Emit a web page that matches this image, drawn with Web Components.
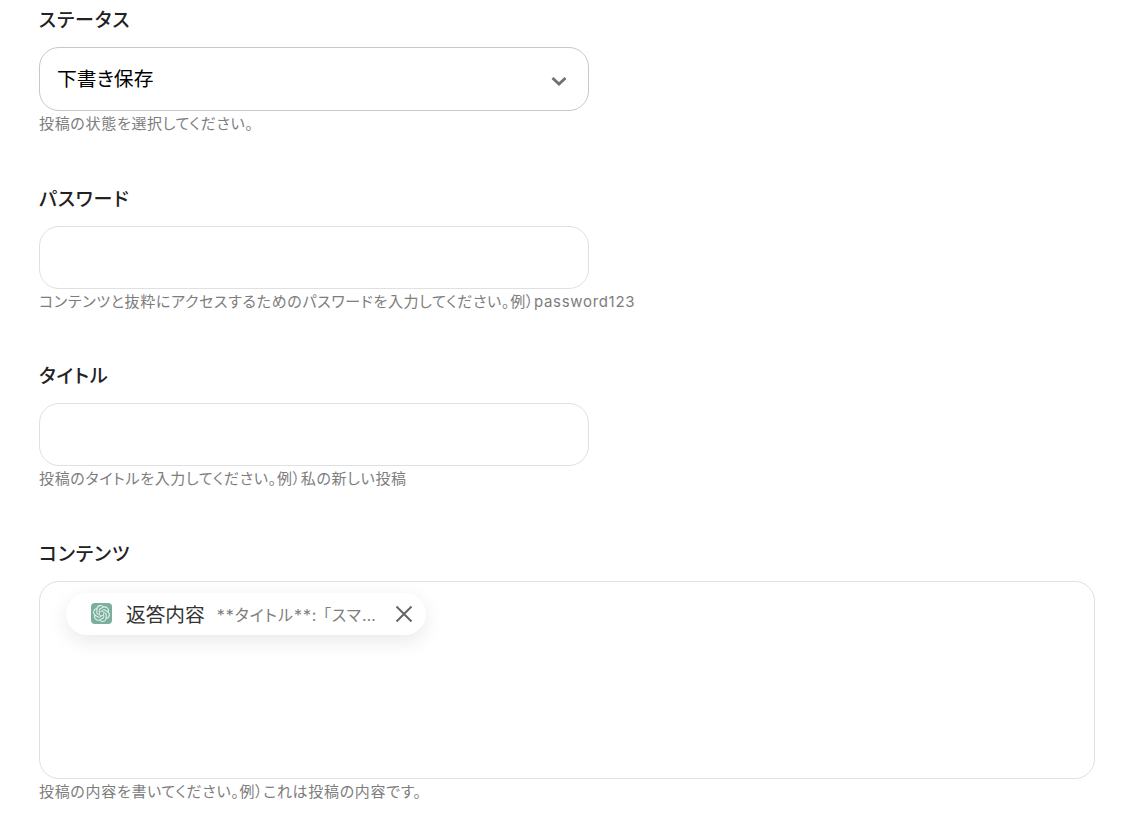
<!DOCTYPE html>
<html lang="ja"><head><meta charset="utf-8"><style>
html,body{margin:0;background:#fff;font-family:Inter,"Noto Sans CJK JP",sans-serif;}
body{height:827px;overflow:hidden}
form-page{padding:8.3px 33px 0 39px}
</style></head><body>
<form-page>
<form-field label="ステータス" hint="投稿の状態を選択してください。" kind="select">下書き保存</form-field>
<form-field label="パスワード" hint="コンテンツと抜粋にアクセスするためのパスワードを入力してください。例）password123" kind="input"></form-field>
<form-field label="タイトル" hint="投稿のタイトルを入力してください。例）私の新しい投稿" kind="input"></form-field>
<form-field label="コンテンツ" hint="投稿の内容を書いてください。例）これは投稿の内容です。" kind="area"><var-chip name="返答内容" value="**タイトル**: 「スマートフォンの選び方」"></var-chip></form-field>
</form-page>
<script>
customElements.define('form-page',class extends HTMLElement{constructor(){super();this.attachShadow({mode:'open'}).innerHTML=`<style>:host{display:flex;flex-direction:column;gap:52.3px}</style><slot></slot>`}});
customElements.define('form-field',class extends HTMLElement{constructor(){super();const r=this.attachShadow({mode:'open'});const k=this.getAttribute('kind');
r.innerHTML=`<style>
:host{display:block;font-feature-settings:"palt"}
.label{font-size:19px;line-height:24px;height:24px;padding-top:1px;font-weight:500;color:#222;letter-spacing:.05em;margin-bottom:14px}
.box{box-sizing:border-box;border:1px solid #e0e0e0;border-radius:20px;background:#fff;width:550px;height:63px;display:flex;align-items:center;padding:0 17px;font-size:19.8px;color:#000}
.select{height:64px;border-color:#c8c8c8;padding-bottom:4px}
.area{width:1056px;height:198px;align-items:flex-start;padding:11px 26px}
.hint{font-size:15px;line-height:20px;height:20px;margin-top:3.2px;color:#7d7d7d;letter-spacing:.68px;white-space:nowrap}
svg{margin-left:auto;margin-right:3px}
</style><div class="label">${this.getAttribute('label')}</div>
<div class="box ${k}"><slot></slot>${k==='select'?'<svg width="18" height="12" viewBox="0 0 18 12" style="margin-top:8px"><path d="M2.5 3 9 9l6.5-6" fill="none" stroke="#707070" stroke-width="2.8"/></svg>':''}</div>
<div class="hint">${this.getAttribute('hint')}</div>`}});
customElements.define('var-chip',class extends HTMLElement{constructor(){super();const r=this.attachShadow({mode:'open'});
r.innerHTML=`<style>
:host{display:flex;align-items:center;box-sizing:border-box;width:360px;height:42px;border-radius:21px;background:#fff;box-shadow:0 6px 20px rgba(0,0,0,.09);padding:0 13px 0 25px}
.ic{flex:none;width:21px;height:21px;border-radius:4px;background:#7aaf9e;display:flex;align-items:center;justify-content:center}
.name{flex:none;margin-left:14px;font-size:19.7px;color:#333}
.val{flex:1;min-width:0;margin-left:12px;font-size:16px;letter-spacing:.06em;color:#808080;overflow:hidden;white-space:nowrap;text-overflow:ellipsis}
.x{flex:none;margin-left:18px}
</style><span class="ic"><svg width="17" height="17" viewBox="0 0 24 24" style="margin:0"><path fill="#e4f0ec" d="M22.2819 9.8211a5.9847 5.9847 0 0 0-.5157-4.9108 6.0462 6.0462 0 0 0-6.5098-2.9A6.0651 6.0651 0 0 0 4.9807 4.1818a5.9847 5.9847 0 0 0-3.9977 2.9 6.0462 6.0462 0 0 0 .7427 7.0966 5.98 5.98 0 0 0 .511 4.9107 6.051 6.051 0 0 0 6.5146 2.9001A5.9847 5.9847 0 0 0 13.2599 24a6.0557 6.0557 0 0 0 5.7718-4.2058 5.9894 5.9894 0 0 0 3.9977-2.9001 6.0557 6.0557 0 0 0-.7475-7.0729zm-9.022 12.6081a4.4755 4.4755 0 0 1-2.8764-1.0408l.1419-.0804 4.7783-2.7582a.7948.7948 0 0 0 .3927-.6813v-6.7369l2.02 1.1686a.071.071 0 0 1 .038.052v5.5826a4.504 4.504 0 0 1-4.4945 4.4944zm-9.6607-4.1254a4.4708 4.4708 0 0 1-.5346-3.0137l.142.0852 4.783 2.7582a.7712.7712 0 0 0 .7806 0l5.8428-3.3685v2.3324a.0804.0804 0 0 1-.0332.0615L9.74 19.9502a4.4992 4.4992 0 0 1-6.1408-1.6464zM2.3408 7.8956a4.485 4.485 0 0 1 2.3655-1.9728V11.6a.7664.7664 0 0 0 .3879.6765l5.8144 3.3543-2.0201 1.1685a.0757.0757 0 0 1-.071 0l-4.8303-2.7865A4.504 4.504 0 0 1 2.3408 7.872zm16.5963 3.8558L13.1038 8.364 15.1192 7.2a.0757.0757 0 0 1 .071 0l4.8303 2.7913a4.4944 4.4944 0 0 1-.6765 8.1042v-5.6772a.79.79 0 0 0-.407-.667zm2.0107-3.0231l-.142-.0852-4.7735-2.7818a.7759.7759 0 0 0-.7854 0L9.409 9.2297V6.8974a.0662.0662 0 0 1 .0284-.0615l4.8303-2.7866a4.4992 4.4992 0 0 1 6.6802 4.66zM8.3065 12.863l-2.02-1.1638a.0804.0804 0 0 1-.038-.0567V6.0742a4.4992 4.4992 0 0 1 7.3757-3.4537l-.142.0805L8.704 5.459a.7948.7948 0 0 0-.3927.6813zm1.0976-2.3654l2.602-1.4998 2.6069 1.4998v2.9994l-2.5974 1.4997-2.6067-1.4997Z"/></svg></span><span class="name">${this.getAttribute('name')}</span><span class="val">${this.getAttribute('value')}</span><svg class="x" width="18" height="18" viewBox="0 0 18 18"><path d="M1.5 1.5l15 15M16.5 1.5l-15 15" stroke="#666" stroke-width="2" fill="none"/></svg>`}});
</script></body></html>
